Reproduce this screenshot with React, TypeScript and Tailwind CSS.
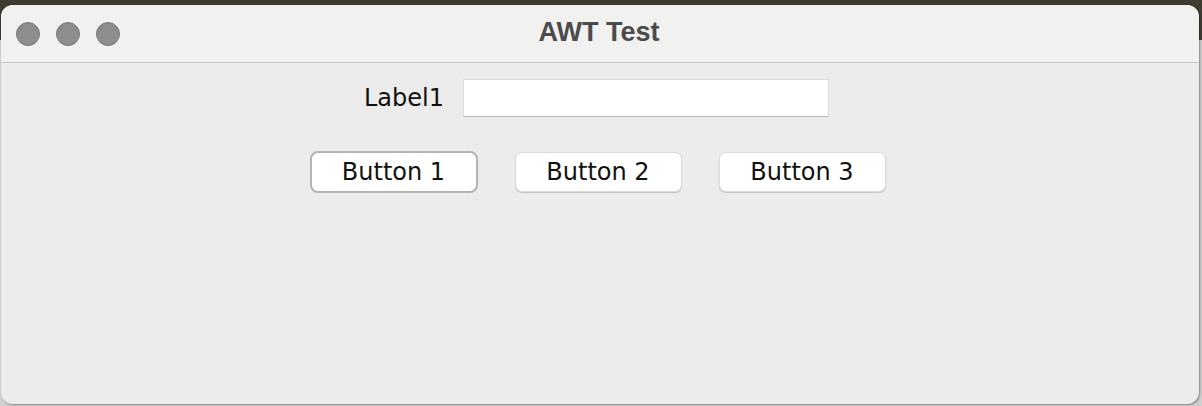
export default function App() {
    return (
        <div className="w-[1202px] h-[406px] overflow-hidden bg-[linear-gradient(to_bottom,#3e3c31_0,#3e3c31_40px,#cfcfcf_40px)] pt-[5px] pl-[1px]">
            <div className="w-[1198px] h-[399px] rounded-[12px] overflow-hidden flex flex-col bg-[#ececec] shadow-[1px_1px_2px_rgba(0,0,0,0.35)]">
                {/* title bar */}
                <div className="relative h-[58px] shrink-0 bg-[#f1f1ef] border-b border-[#c6c6c6] flex items-center justify-center">
                    <div className="absolute left-[15px] top-[17px] flex gap-[16px]">
                        <span className="w-[24px] h-[24px] rounded-full bg-[#8d8d8b] border border-[#777775]" />
                        <span className="w-[24px] h-[24px] rounded-full bg-[#8d8d8b] border border-[#777775]" />
                        <span className="w-[24px] h-[24px] rounded-full bg-[#8d8d8b] border border-[#777775]" />
                    </div>
                    <h1 className="font-['Liberation_Sans',Arial,sans-serif] font-bold text-[27px] text-[#4b4b4b] -mt-[2px] pr-[2px]">
                        AWT Test
                    </h1>
                </div>

                {/* content */}
                <div className="flex flex-col items-center pt-[16px] pr-[5px] gap-[34px] font-['DejaVu_Sans',sans-serif] text-[24px] text-[#111]">
                    <div className="flex items-center gap-[19px] pr-[2px]">
                        <span>Label1</span>
                        <div className="w-[366px] h-[38px] bg-white border border-[#dcdcdc] border-b-[#b9b9b9]" />
                    </div>
                    <div className="flex items-center gap-[37px]">
                        <button className="w-[168px] h-[42px] rounded-[8px] bg-white border-2 border-[#b3b3b3] leading-none">
                            Button 1
                        </button>
                        <button className="w-[167px] h-[40px] rounded-[7px] bg-white border border-[#dadada] shadow-[0_1px_1px_rgba(0,0,0,0.18)] leading-none">
                            Button 2
                        </button>
                        <button className="w-[167px] h-[40px] rounded-[7px] bg-white border border-[#dadada] shadow-[0_1px_1px_rgba(0,0,0,0.18)] leading-none">
                            Button 3
                        </button>
                    </div>
                </div>
            </div>
        </div>
    )
}
